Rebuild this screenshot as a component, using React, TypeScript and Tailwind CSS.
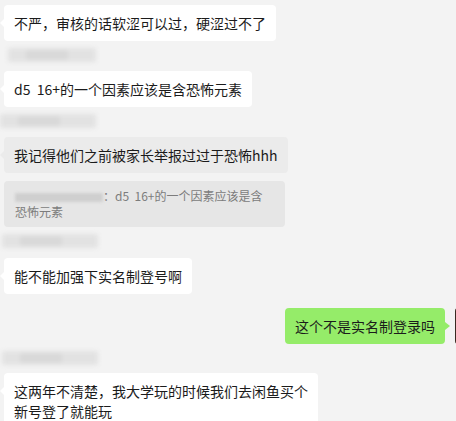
import React from "react";

function Name({ w = 92, ml = 4, h = 30 }: { w?: number; ml?: number; h?: number }) {
  return (
    <div className="flex shrink-0 items-start pt-[7px]" style={{ height: h, marginLeft: ml }}>
      <div className="flex h-[14px] items-center rounded-[2px] bg-[#e2e2e2] blur-[2px]" style={{ width: w }}>
        <div className="ml-[18px] h-[10px] w-[42px] rounded-[2px] bg-[#d9d9d9]" />
      </div>
    </div>
  );
}

function Bubble({
  children,
  bg = "bg-white",
  arrow = "border-r-white",
}: {
  children: React.ReactNode;
  bg?: string;
  arrow?: string;
}) {
  return (
    <div className={`relative w-fit shrink-0 rounded-[4px] ${bg} px-[10px] py-[8px] text-[14px] leading-[20px] text-[#1b1b1b] whitespace-pre`}>
      <span
        className={`absolute left-[-4px] top-[14px] h-0 w-0 border-y-[4px] border-y-transparent border-r-[4px] ${arrow}`}
      />
      {children}
    </div>
  );
}

export default function App() {
  return (
    <div className="flex w-[456px] h-[421px] flex-col overflow-hidden bg-[#f3f3f3] pt-[5px] pl-[4px] font-['Noto_Sans_CJK_SC','Microsoft_YaHei',sans-serif]">
      <Bubble>不严，审核的话软涩可以过，硬涩过不了</Bubble>
      <Name w={88} ml={4} />
      <Bubble>d5  16+的一个因素应该是含恐怖元素</Bubble>
      <Name w={96} ml={-4} />
      <Bubble bg="bg-[#ebebeb]" arrow="border-r-[#ebebeb]">我记得他们之前被家长举报过过于恐怖hhh</Bubble>
      <div className="mt-[8px] w-[281px] shrink-0 rounded-[4px] bg-[#e6e6e6] px-[11px] py-[7px] text-[12px] leading-[16px] text-[#7c7c7c] whitespace-pre">
        <span className="inline-block align-middle h-[9px] w-[88px] rounded-[1px] bg-[#cfcfcf] blur-[1.5px]" />
        {"：d5  16+的一个因素应该是含\n恐怖元素"}
      </div>
      <Name w={96} ml={-2} h={31} />
      <Bubble>能不能加强下实名制登号啊</Bubble>
      <div className="mt-[14px] flex shrink-0 justify-end">
        <div className="relative w-fit rounded-[4px] bg-[#95ec69] px-[10px] py-[8px] text-[14px] leading-[20px] text-[#1b1b1b]">
          这个不是实名制登录吗
          <span className="absolute right-[-5px] top-[14px] h-0 w-0 border-y-[4px] border-y-transparent border-l-[5px] border-l-[#95ec69]" />
        </div>
        <div className="ml-[10px] mr-[-35px] h-[36px] w-[36px] shrink-0 rounded-[3px] bg-[#3a2a22]" />
      </div>
      <Name w={96} ml={-2} h={29} />
      <Bubble>{"这两年不清楚，我大学玩的时候我们去闲鱼买个\n新号登了就能玩"}</Bubble>
    </div>
  );
}
